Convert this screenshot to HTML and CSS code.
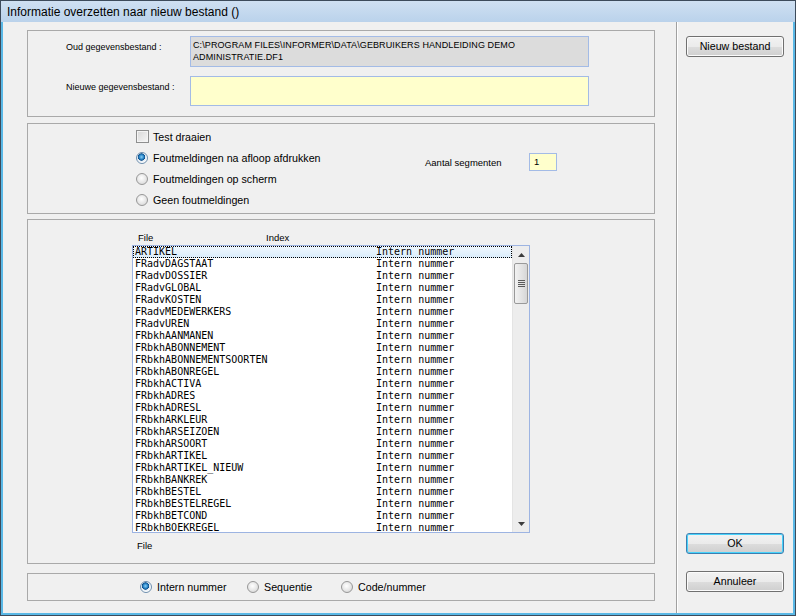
FILE: index.html
```html
<!DOCTYPE html>
<html>
<head>
<meta charset="utf-8">
<title>Informatie overzetten naar nieuw bestand ()</title>
<link rel="stylesheet" href="styles.css">
</head>
<body>
<div class="window">
  <div class="titlebar">Informatie overzetten naar nieuw bestand ()</div>
  <div class="client">
    <div class="main">
      <div class="group g-files">
        <div class="lbl">Oud gegevensbestand :</div>
        <div class="field old">C:\PROGRAM FILES\INFORMER\DATA\GEBRUIKERS HANDLEIDING DEMO<br>ADMINISTRATIE.DF1</div>
        <div class="lbl">Nieuwe gegevensbestand :</div>
        <div class="field new"></div>
      </div>

      <div class="group g-opts">
        <div class="opts">
          <div class="opt"><span class="check"></span>Test draaien</div>
          <div class="opt"><span class="radio on"></span>Foutmeldingen na afloop afdrukken</div>
          <div class="opt"><span class="radio"></span>Foutmeldingen op scherm</div>
          <div class="opt"><span class="radio"></span>Geen foutmeldingen</div>
        </div>
        <div class="segments">
          <span class="seglbl">Aantal segmenten</span>
          <span class="segbox">1</span>
        </div>
      </div>

      <div class="group g-list">
        <div class="listhead"><span class="h-file">File</span><span>Index</span></div>
        <div class="listbox">
          <div class="rows">
            <div class="row sel"><span class="c1">ARTIKEL</span><span>Intern nummer</span></div>
            <div class="row"><span class="c1">FRadvDAGSTAAT</span><span>Intern nummer</span></div>
            <div class="row"><span class="c1">FRadvDOSSIER</span><span>Intern nummer</span></div>
            <div class="row"><span class="c1">FRadvGLOBAL</span><span>Intern nummer</span></div>
            <div class="row"><span class="c1">FRadvKOSTEN</span><span>Intern nummer</span></div>
            <div class="row"><span class="c1">FRadvMEDEWERKERS</span><span>Intern nummer</span></div>
            <div class="row"><span class="c1">FRadvUREN</span><span>Intern nummer</span></div>
            <div class="row"><span class="c1">FRbkhAANMANEN</span><span>Intern nummer</span></div>
            <div class="row"><span class="c1">FRbkhABONNEMENT</span><span>Intern nummer</span></div>
            <div class="row"><span class="c1">FRbkhABONNEMENTSOORTEN</span><span>Intern nummer</span></div>
            <div class="row"><span class="c1">FRbkhABONREGEL</span><span>Intern nummer</span></div>
            <div class="row"><span class="c1">FRbkhACTIVA</span><span>Intern nummer</span></div>
            <div class="row"><span class="c1">FRbkhADRES</span><span>Intern nummer</span></div>
            <div class="row"><span class="c1">FRbkhADRESL</span><span>Intern nummer</span></div>
            <div class="row"><span class="c1">FRbkhARKLEUR</span><span>Intern nummer</span></div>
            <div class="row"><span class="c1">FRbkhARSEIZOEN</span><span>Intern nummer</span></div>
            <div class="row"><span class="c1">FRbkhARSOORT</span><span>Intern nummer</span></div>
            <div class="row"><span class="c1">FRbkhARTIKEL</span><span>Intern nummer</span></div>
            <div class="row"><span class="c1">FRbkhARTIKEL_NIEUW</span><span>Intern nummer</span></div>
            <div class="row"><span class="c1">FRbkhBANKREK</span><span>Intern nummer</span></div>
            <div class="row"><span class="c1">FRbkhBESTEL</span><span>Intern nummer</span></div>
            <div class="row"><span class="c1">FRbkhBESTELREGEL</span><span>Intern nummer</span></div>
            <div class="row"><span class="c1">FRbkhBETCOND</span><span>Intern nummer</span></div>
            <div class="row"><span class="c1">FRbkhBOEKREGEL</span><span>Intern nummer</span></div>
          </div>
          <div class="vscroll">
            <div class="arrow">
              <svg width="7" height="4" viewBox="0 0 7 4"><path d="M3.5 0 L7 4 L0 4 Z" fill="#3c3c3c"/></svg>
            </div>
            <div class="thumb"><span class="grip"></span></div>
            <div class="track"></div>
            <div class="arrow">
              <svg width="7" height="4" viewBox="0 0 7 4"><path d="M0 0 L7 0 L3.5 4 Z" fill="#3c3c3c"/></svg>
            </div>
          </div>
        </div>
        <div class="listfoot">File</div>
      </div>

      <div class="group g-sort">
        <div class="opt"><span class="radio on"></span>Intern nummer</div>
        <div class="opt"><span class="radio"></span>Sequentie</div>
        <div class="opt"><span class="radio"></span>Code/nummer</div>
      </div>
    </div>

    <div class="side">
      <div class="btn">Nieuw bestand</div>
      <div class="btn-stack">
        <div class="btn default">OK</div>
        <div class="btn">Annuleer</div>
      </div>
    </div>
  </div>
</div>
</body>
</html>
```

FILE: styles.css
```css
* {
  box-sizing: border-box;
}

html,
body {
  margin: 0;
  padding: 0;
}

body {
  width: 796px;
  height: 616px;
  overflow: hidden;
  background: #ffffff;
  font-family: "Liberation Sans", Arial, sans-serif;
  color: #000000;
}

.window {
  width: 796px;
  height: 616px;
  display: flex;
  flex-direction: column;
  border: 1px solid #3d4b5b;
  background: #5ab8e6;
}

.titlebar {
  height: 21px;
  line-height: 22px;
  padding-left: 6px;
  font-size: 12px;
  background: linear-gradient(#cfe0f2, #bad2eb);
  white-space: nowrap;
}

.client {
  flex: 1;
  display: flex;
  margin: 0 2px 2px 2px;
  background: #f0f0f0;
}

.main {
  width: 673px;
  padding: 8px 21px 0 24px;
  display: flex;
  flex-direction: column;
}

.group {
  border: 1px solid #a9a9a9;
  width: 628px;
}

/* group 1 : files */
.g-files {
  height: 87px;
  margin-bottom: 6px;
  padding: 5px 0 0 38px;
  display: grid;
  grid-template-columns: 124px 399px;
  grid-template-rows: 31px 30px;
  row-gap: 9px;
}

.lbl {
  font-size: 9px;
  padding-top: 6px;
  white-space: nowrap;
}

.field {
  border: 1px solid #a3bbe6;
}

.field.old {
  background: #dcdcdc;
  font-size: 9px;
  letter-spacing: 0.1px;
  line-height: 12px;
  padding: 2px 0 0 2px;
  white-space: nowrap;
}

.field.new {
  background: #ffffcc;
}

/* group 2 : options */
.g-opts {
  height: 91px;
  margin-bottom: 5px;
  display: flex;
  padding: 2px 0 0 108px;
}

.opts {
  width: 289px;
  display: flex;
  flex-direction: column;
}

.opt {
  height: 21px;
  display: flex;
  align-items: center;
  font-size: 10.7px;
  white-space: nowrap;
}

.check {
  width: 13px;
  height: 13px;
  border: 1px solid #8e8f8f;
  background: linear-gradient(135deg, #d8d8d8, #f6f6f6);
  box-shadow: inset 0 0 0 1px #f4f4f4;
  margin-right: 4px;
  flex: none;
}

.radio {
  width: 12px;
  height: 12px;
  border-radius: 50%;
  border: 1px solid #979797;
  background: radial-gradient(circle at 45% 40%, #ffffff 0%, #e6e6e6 55%, #cfcfcf 100%);
  margin-right: 5px;
  flex: none;
}

.radio.on {
  border-color: #6e8fae;
  background: radial-gradient(circle at 45% 40%, #8cd0f5 0%, #2a86c8 28%, #0d4d88 42%, #dfe9f2 48%, #ffffff 70%, #d5dde4 100%);
}

.segments {
  margin-top: 27px;
  height: 18px;
  display: flex;
  align-items: center;
}

.seglbl {
  width: 104px;
  font-size: 9.5px;
}

.segbox {
  width: 28px;
  height: 18px;
  border: 1px solid #a3bbe6;
  background: #ffffcc;
  font-size: 9.5px;
  line-height: 16px;
  padding-left: 4px;
}

/* group 3 : list */
.g-list {
  height: 345px;
  margin-bottom: 9px;
  padding: 11px 0 0 104px;
}

.listhead {
  height: 14px;
  font-size: 9.5px;
  line-height: 13px;
  padding-left: 6px;
  display: flex;
}

.h-file {
  width: 128px;
}

.listbox {
  width: 398px;
  height: 288px;
  border: 1px solid #9db4e2;
  background: #ffffff;
  display: flex;
}

.rows {
  flex: 1;
  overflow: hidden;
}

.row {
  height: 12px;
  display: flex;
  font-family: "DejaVu Sans Mono", "Liberation Mono", monospace;
  font-size: 10px;
  line-height: 12px;
  white-space: nowrap;
}

.row .c1 {
  width: 243px;
  padding-left: 2px;
}

.row.sel {
  background: linear-gradient(#f1f8fe, #d9ecfb);
  outline: 1px dotted #000000;
  outline-offset: -1px;
}

.vscroll {
  width: 17px;
  display: flex;
  flex-direction: column;
  background: #ededed;
  border-left: 1px solid #e4e4e4;
}

.arrow {
  height: 17px;
  display: flex;
  align-items: center;
  justify-content: center;
  flex: none;
}

.thumb {
  height: 41px;
  margin: 0 1px;
  border: 1px solid #999999;
  border-radius: 2px;
  background: linear-gradient(90deg, #f2f2f2, #e2e2e2 60%, #d6d6d6);
  display: flex;
  align-items: center;
  justify-content: center;
  flex: none;
}

.grip {
  width: 7px;
  height: 7px;
  background: repeating-linear-gradient(#5a5a5a 0 1px, transparent 1px 2px);
}

.track {
  flex: 1;
}

.listfoot {
  font-size: 9.5px;
  line-height: 13px;
  padding: 6px 0 0 5px;
}

/* group 4 : sort */
.g-sort {
  height: 28px;
  display: grid;
  grid-template-columns: 107px 94px auto;
  align-items: center;
  padding-left: 112px;
}

/* side */
.side {
  flex: 1;
  border-left: 1px solid #a0a0a0;
  box-shadow: inset 1px 0 0 #ffffff;
  padding: 14px 0 21px 9px;
  display: flex;
  flex-direction: column;
  justify-content: space-between;
}

.btn-stack {
  display: flex;
  flex-direction: column;
  gap: 17px;
}

.btn {
  width: 98px;
  height: 21px;
  border: 1px solid #707070;
  border-radius: 3px;
  background: linear-gradient(#f2f2f2 0%, #ebebeb 50%, #dddddd 51%, #cfcfcf 100%);
  box-shadow: inset 0 0 0 1px #fbfbfb;
  font-size: 10.7px;
  line-height: 19px;
  text-align: center;
}

.btn.default {
  border-color: #3c7fb1;
  box-shadow: inset 0 0 0 1px #48d3fb;
}
```
